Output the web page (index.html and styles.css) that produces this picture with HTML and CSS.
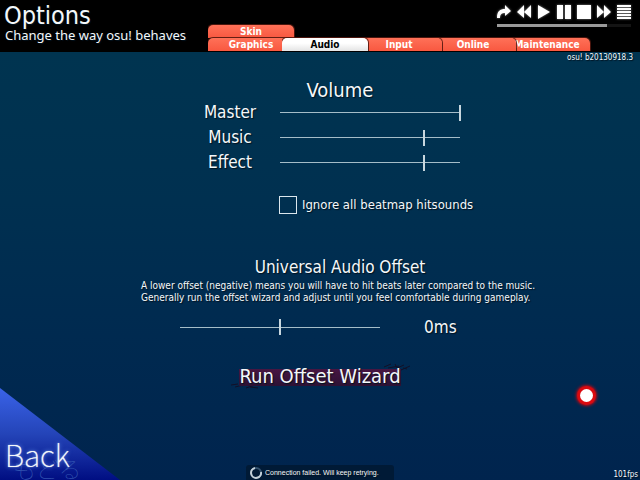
FILE: index.html
```html
<!DOCTYPE html>
<html lang="en">
<head>
<meta charset="utf-8">
<meta name="viewport" content="width=device-width, initial-scale=1">
<title>Options</title>
<link rel="stylesheet" href="styles.css">
</head>
<body>
<header class="top">
  <div class="titles">
    <h1>Options</h1>
    <p>Change the way osu! behaves</p>
  </div>
  <nav class="tabs">
    <div class="tab-row"><a class="tab" href="#skin">Skin</a></div>
    <div class="tab-row">
      <a class="tab" href="#graphics">Graphics</a>
      <a class="tab active" href="#audio">Audio</a>
      <a class="tab third" href="#input">Input</a>
      <a class="tab fourth" href="#online">Online</a>
      <a class="tab" href="#maintenance">Maintenance</a>
    </div>
  </nav>
  <div class="player">
    <div class="controls">
      <button type="button" aria-label="Jump"><svg viewBox="0 0 14 14"><path d="M0 13C0 6 3 4 8 4V0L14 6L8 11V8C5 8 3 9 3 13Z"/></svg></button>
      <button type="button" aria-label="Previous"><svg viewBox="0 0 14 14"><path d="M7 0V13L0 7ZM14 0V13L7 7Z"/></svg></button>
      <button type="button" aria-label="Play"><svg viewBox="0 0 14 14"><path d="M1 0L13 7L1 14Z"/></svg></button>
      <button type="button" aria-label="Pause"><svg viewBox="0 0 14 14"><path d="M0 0H6V14H0ZM8 0H14V14H8Z"/></svg></button>
      <button type="button" aria-label="Stop"><svg viewBox="0 0 14 14"><path d="M0 0H14V14H0Z"/></svg></button>
      <button type="button" aria-label="Next"><svg viewBox="0 0 14 14"><path d="M0 0L7 7L0 13ZM7 0L14 7L7 13Z"/></svg></button>
      <button type="button" aria-label="Playlist"><svg viewBox="0 0 14 14"><path d="M0 0H14V2H0ZM0 3H14V5H0ZM0 6H14V8H0ZM0 9H14V11H0ZM0 12H14V14H0Z"/></svg></button>
    </div>
    <div class="progress"><div class="progress-fill"></div></div>
  </div>
</header>
<p class="version">osu! b20130918.3</p>
<main class="settings">
  <section class="volume">
    <h2 class="volume-title">Volume</h2>
    <div class="row"><label for="master">Master</label><input id="master" type="range" value="100"></div>
    <div class="row"><label for="music">Music</label><input id="music" type="range" value="80"></div>
    <div class="row"><label for="effect">Effect</label><input id="effect" type="range" value="80"></div>
    <div class="check"><input id="ignore" type="checkbox"><label for="ignore">Ignore all beatmap hitsounds</label></div>
  </section>
  <section class="offset">
    <h2><label for="offset">Universal Audio Offset</label></h2>
    <p class="hint">A lower offset (negative) means you will have to hit beats later compared to the music.<br>Generally run the offset wizard and adjust until you feel comfortable during gameplay.</p>
    <div class="offset-row"><input id="offset" type="range" min="-100" max="100" value="0"><output for="offset">0ms</output></div>
  </section>
</main>
<div class="wizard-area">
  <button class="wizard" type="button">
    <svg class="scratch" viewBox="0 0 180 26" aria-hidden="true"><path d="M0 22L7 21M4 24L12 22L9 19M11 23L16 20M15 25L24 22M19 24L27 25M153 4L160 1M157 5L168 3M164 1L166 5L173 2M170 7L179 3M172 5L176 6"/></svg>
    <span>Run Offset Wizard</span>
  </button>
</div>
<button class="back" type="button">
  <svg class="back-shape" viewBox="0 0 120 92" aria-hidden="true">
    <defs><linearGradient id="blue" x1="0" y1="0" x2="0" y2="1"><stop offset="0" stop-color="#3a63e8"/><stop offset="0.5" stop-color="#2444b8"/><stop offset="1" stop-color="#000e82"/></linearGradient></defs>
    <path d="M0 0L120 92H0Z" fill="url(#blue)"/>
  </svg>
  <span class="back-echo" aria-hidden="true">もどる</span>
  <span class="back-text">Back</span>
</button>
<div class="toast" role="status">
  <svg viewBox="0 0 12 12" aria-hidden="true"><circle cx="6" cy="6" r="5" stroke="#34536f"/><path d="M5 1A5 5 0 1 0 11 5" stroke="#c3d0da"/></svg>
  <span>Connection failed. Will keep retrying.</span>
</div>
<p class="fps">101fps</p>
<div class="cursor"></div>
</body>
</html>
```
FILE: styles.css
```css
* { box-sizing: border-box; }

body {
  margin: 0;
  min-height: 100vh;
  position: relative;
  overflow: hidden;
  color: #f4f8fa;
  background: linear-gradient(#003450 52px, #003050 42%, #002a50 70%, #00244e);
  font-family: "DejaVu Sans Condensed", "DejaVu Sans", sans-serif;
  text-shadow: 1px 1px 1px #00121f;
}

h1, h2, p { margin: 0; font-weight: normal; }
button, input { margin: 0; padding: 0; border: 0; background: none; color: inherit; font: inherit; }

.top {
  display: grid;
  grid-template-columns: 208px 1fr auto;
  height: 52px;
  background: #000;
}

.titles { padding: 2px 0 0 4px; white-space: nowrap; }
.titles h1 { font-size: 25px; line-height: 28px; }
.titles p { padding-left: 1px; font: 13px/10px "Noto Sans", sans-serif; }

.tabs { align-self: end; height: 27px; min-width: 0; }
.tab-row { display: flex; height: 13px; }
.tab {
  flex: none;
  position: relative;
  width: 86px;
  height: 13px;
  margin-right: -12px;
  border-radius: 5px 5px 0 0;
  background: linear-gradient(#ff7158, #f85840);
  box-shadow: 0 0 1px 1px #54180f;
  color: #fff;
  font: bold 10px/13px "DejaVu Sans Condensed", "DejaVu Sans", sans-serif;
  text-align: center;
  text-decoration: none;
  text-shadow: none;
  clip-path: inset(-1px -1px 0 0);
}
.tab.third { z-index: 2; }
.tab.fourth { z-index: 1; }
.tab.active { z-index: 3; background: linear-gradient(#fff 40%, #e4e4e4); color: #000; }

.player { grid-column: 3; width: 134px; margin-right: 9px; padding-top: 5px; z-index: 4; }
.controls { display: flex; justify-content: space-between; }
.controls button { width: 14px; height: 14px; }
.controls svg { display: block; width: 14px; height: 14px; fill: #fff; filter: drop-shadow(0 0 1px #888); }
.progress { height: 3px; margin-top: 5px; background: #141414; }
.progress-fill { width: 82%; height: 3px; background: #999; }

.version { padding-right: 7px; font-size: 8px; line-height: 12px; text-align: right; }

.settings { width: 440px; margin: 0 auto; padding: 14px 0 0 40px; }
h2 { font-size: 17px; line-height: 24px; text-align: center; }
.volume-title { font-size: 20px; }
.row { display: grid; grid-template-columns: 140px 182px; height: 25px; align-items: center; font-size: 17px; line-height: 22px; }
.volume .row:first-of-type { margin-top: -2px; }
.row label { padding: 0 0 2px 40px; text-align: center; }

input[type="range"] { appearance: none; width: 100%; height: 18px; margin-left: -1px; }
input[type="range"]::-webkit-slider-runnable-track {
  height: 16px;
  background: linear-gradient(#a5bdc8, #a5bdc8) center / calc(100% - 2px) 1px no-repeat;
}
input[type="range"]::-webkit-slider-thumb { appearance: none; width: 2px; height: 16px; background: #c8d7de; }

.check { display: flex; align-items: center; gap: 5px; margin: 21px 0 0 139px; font-size: 13px; line-height: 18px; }
.check input { appearance: none; width: 18px; height: 18px; border: 1px solid #dbe7ee; }

.offset { padding-top: 41px; }
.hint { padding: 1px 0 0 1px; font-size: 10px; line-height: 12px; white-space: nowrap; }
.offset-row { display: grid; grid-template-columns: 202px auto; gap: 42px; align-items: center; padding: 12px 0 0 40px; font-size: 17px; line-height: 22px; }

.wizard-area { display: flex; justify-content: center; padding-top: 26px; }
.wizard {
  position: relative;
  height: 24px;
  font-size: 20px;
  line-height: 24px;
  text-shadow: inherit;
}
.wizard span { display: block; position: relative; background: linear-gradient(transparent 5px, #481642 5px, #2c1234 22px, transparent 22px); }
.scratch { position: absolute; left: -8px; top: -1px; width: 180px; height: 26px; fill: none; stroke: #121027; }

.back { position: absolute; left: 0; bottom: 0; width: 120px; height: 92px; text-align: left; }
.back-shape { display: block; width: 120px; height: 92px; }
.back-text { position: absolute; left: 5px; bottom: 6px; font: 100 30px/40px "Noto Sans CJK JP", sans-serif; text-shadow: 0 0 1px #fff, 0 0 4px #6fa8ff; }
.back-echo { position: absolute; left: 13px; bottom: 0; color: #3152b0; font: 100 23px/24px "Noto Sans CJK JP", sans-serif; text-shadow: none; }

.toast {
  position: absolute;
  left: 50%;
  bottom: 0;
  transform: translateX(-50%);
  display: flex;
  align-items: center;
  gap: 3px;
  width: 148px;
  height: 15px;
  padding-left: 4px;
  border-radius: 3px 3px 0 0;
  background: #001a36;
  font: 7px/15px "Liberation Sans", sans-serif;
  white-space: nowrap;
}
.toast svg { width: 12px; height: 12px; fill: none; stroke-width: 2; }

.fps { position: absolute; right: 2px; bottom: 0; font-size: 8px; line-height: 10px; }
.cursor {
  position: absolute;
  right: 47px;
  bottom: 78px;
  width: 13px;
  height: 13px;
  border-radius: 50%;
  background: #fff;
  box-shadow: 0 0 1px 3px #dc0a10, 0 0 3px 4px #b50b18;
}
```
